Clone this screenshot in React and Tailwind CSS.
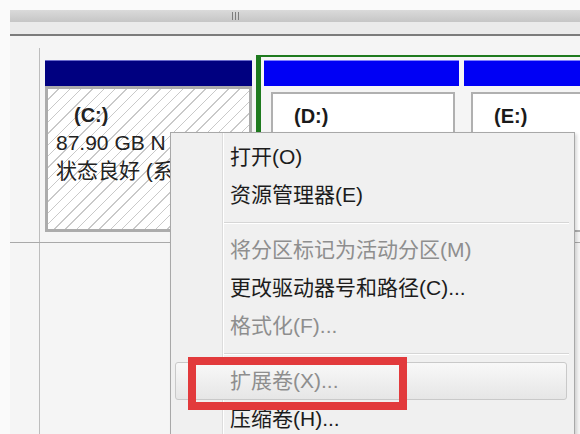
import React from 'react';

const font = { fontFamily: '"Liberation Sans", "Noto Sans CJK SC", sans-serif' };

const hatch =
  'bg-[repeating-linear-gradient(135deg,#ffffff_0px,#ffffff_7px,#c9c9c9_7px,#c9c9c9_8px)]';

const MenuItem = ({ label, disabled }) => (
  <div
    className={
      'h-[38px] flex items-center pl-[59px] text-[21px] whitespace-nowrap ' +
      (disabled ? 'text-[#8e8e8e]' : 'text-[#1c1c1c]')
    }
  >
    {label}
  </div>
);

const Separator = () => (
  <div className="h-[17px] flex items-center pl-[51px] pr-[5px]">
    <div className="w-full h-[2px] border-t border-[#d6d6d6] border-b border-b-white" />
  </div>
);

const Partition = ({ name, width }) => (
  <div className="flex flex-col shrink-0" style={{ width }}>
    <div className="h-[26px] bg-[#0000f5] border-t border-[#8080ff]" />
    <div className="pt-[6px] pl-[7px] pr-[4px]">
      <div className="h-[140px] bg-white border-2 border-[#b0b0b0] pl-[21px] pt-[7px]">
        <div className="text-[20px] font-bold text-[#1a1a1a]">{name}</div>
      </div>
    </div>
  </div>
);

export default function App() {
  return (
    <div
      className="relative w-[580px] h-[434px] overflow-hidden bg-[#fafafa] flex flex-col"
      style={font}
    >
      {/* scrollbar strip */}
      <div className="h-[10px] shrink-0" />
      <div className="h-[12px] shrink-0 ml-[10px] bg-gradient-to-b from-[#dadada] to-[#c6c6c6] flex items-center pl-[222px]">
        <div className="flex gap-[2px]">
          <div className="w-[1px] h-[8px] bg-[#7d7d7d]" />
          <div className="w-[1px] h-[8px] bg-[#7d7d7d]" />
          <div className="w-[1px] h-[8px] bg-[#7d7d7d]" />
        </div>
      </div>
      <div className="h-[12px] shrink-0 ml-[10px] bg-[#ebebeb]" />
      <div className="h-[2px] shrink-0 ml-[10px] bg-[#7c7c7c]" />

      {/* disk row */}
      <div className="ml-[10px] h-[207px] shrink-0 flex bg-[#f5f5f5] border-b border-[#a9a9a9]">
        <div className="w-[30px] shrink-0 flex flex-col">
          <div className="h-[12px]" />
          <div className="flex-1 border-r border-[#bdbdbd]" />
        </div>
        <div className="flex flex-1 min-w-0 items-start pl-[5px] overflow-hidden">
          <div className="w-[207px] shrink-0 mt-[24px] flex flex-col">
            <div className="h-[26px] bg-[#000080] border-t border-[#6a6acc]" />
            <div
              className={
                'h-[146px] border-[3px] border-[#acacac] pl-[8px] pt-[12px] text-[21px] leading-[28px] text-[#222] overflow-hidden ' +
                hatch
              }
            >
              <div className="font-bold pl-[18px] text-[20px]">(C:)</div>
              <div className="whitespace-nowrap">87.90 GB N</div>
              <div className="whitespace-nowrap">状态良好 (系</div>
            </div>
          </div>
          <div className="ml-[4px] mt-[19px] w-[330px] shrink-0 border-l-[5px] border-t-2 border-[#1e7a1e] flex pt-[3px] pl-[3px] gap-[5px]">
            <Partition name="(D:)" width={195} />
            <Partition name="(E:)" width={160} />
          </div>
        </div>
      </div>

      {/* lower row */}
      <div className="ml-[10px] flex-1 flex bg-[#f5f5f5]">
        <div className="w-[30px] shrink-0 border-r border-[#bdbdbd]" />
      </div>

      {/* context menu */}
      <div className="absolute left-[170px] top-[132px] w-[405px] h-[310px] bg-[#f0f0f0] border border-[#a8a8a8] pt-[5px] shadow-[2px_2px_3px_rgba(0,0,0,0.15)]">
        <div className="absolute left-[51px] top-0 bottom-0 w-[2px] border-l border-[#dcdcdc] border-r border-r-white" />
        <MenuItem label="打开(O)" />
        <MenuItem label="资源管理器(E)" />
        <Separator />
        <MenuItem label="将分区标记为活动分区(M)" disabled />
        <MenuItem label="更改驱动器号和路径(C)..." />
        <MenuItem label="格式化(F)..." disabled />
        <Separator />
        <div className="relative z-10 mx-[4px] mr-[7px] h-[38px] flex items-center pl-[54px] text-[21px] text-[#8e8e8e] rounded-[3px] border border-[#c9c9c9] bg-gradient-to-b from-[#f8f8f8] to-[#e6e6e6]">
          扩展卷(X)...
        </div>
        <MenuItem label="压缩卷(H)..." />
      </div>

      {/* red annotation box */}
      <div className="absolute left-[188px] top-[357px] w-[219px] h-[53px] border-[8px] border-[#e23a3c] z-20" />
    </div>
  );
}
